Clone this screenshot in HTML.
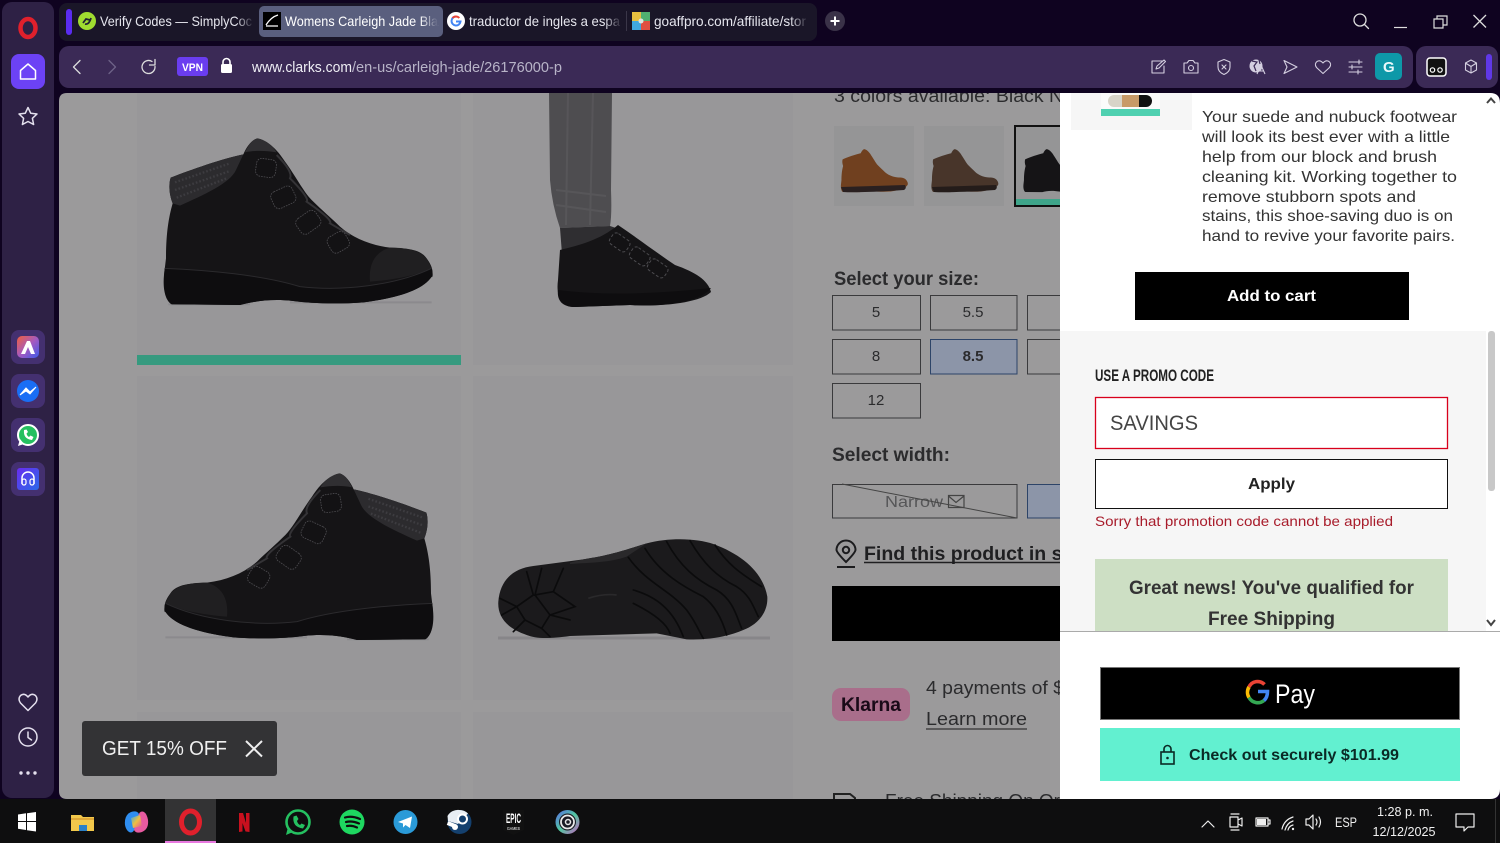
<!DOCTYPE html>
<html><head><meta charset="utf-8"><style>
html,body{margin:0;padding:0;background:#0f0320;width:1500px;height:843px;overflow:hidden}
svg{display:block}
text{font-family:"Liberation Sans",sans-serif}
.pg{fill:#2b2b2d;font-size:18px}
.p{fill:#333;font-size:16px}
.tab{fill:#e6e6ee;font-size:14px}
.ic{fill:none;stroke:#e4e0ee;stroke-width:1.5;stroke-linecap:round;stroke-linejoin:round}
.adr path,.adr circle{fill:none;stroke:#d4cfe0;stroke-width:1.100;stroke-linecap:round;stroke-linejoin:round}
.tr{fill:none;stroke:#eee;stroke-width:1.2;stroke-linecap:round;stroke-linejoin:round}
</style></head><body>
<svg width="1500" height="843" viewBox="0 0 1500 843" xmlns="http://www.w3.org/2000/svg">
<defs>
<path id="bs" d="M122 248C180 225 280 190 340 178C350 155 365 135 382 130C410 135 440 160 465 200C495 240 520 290 545 315C575 345 605 370 630 395C670 430 720 450 780 458C830 460 870 462 890 490C905 510 912 530 905 545C880 585 800 610 700 622C620 628 540 625 490 618C420 610 370 620 330 630L125 628C105 615 98 580 102 540L108 490C108 420 115 370 128 325C118 300 115 270 122 248Z"/>
<g id="boot">
<path d="M115 628H360M480 622H905" stroke="#7d7c80" stroke-width="6" opacity=".45"/>
<use href="#bs" fill="#151416"/>
<path d="M122 248C180 225 280 190 340 178L318 225C300 265 220 300 150 332L128 325C118 300 115 270 122 248Z" fill="#2c2b2e"/>
<path d="M135 262L300 205M135 285L300 228M140 308L290 250" stroke="#3d3c40" stroke-width="7" stroke-dasharray="5 6" fill="none"/>
<path d="M345 172C355 150 368 133 382 130C410 135 430 155 440 172C410 168 380 165 345 172Z" fill="#302f32"/>
<path d="M720 560C715 500 740 470 780 458C840 458 880 470 895 500L905 520C850 545 780 555 720 560Z" fill="#201f21"/>
<path d="M104 520C230 525 400 540 510 575C640 590 800 570 905 520C912 545 905 550 905 545C880 585 800 610 700 622C620 628 540 625 490 618C420 610 370 620 330 630L125 628C105 615 98 580 104 520Z" fill="#0e0d0f"/>
<path d="M104 520C230 525 400 540 510 575C640 590 800 570 905 520" fill="none" stroke="#2b2a2d" stroke-width="3"/>
<path d="M440 180Q490 230 480 250Q540 310 530 320Q610 375 600 385L660 420" fill="none" stroke="#343336" stroke-width="6"/>
<g fill="#131214" stroke="#4c4b4f" stroke-width="2.500" stroke-dasharray="5 3">
<rect x="378" y="192" width="60" height="54" rx="16" transform="rotate(8 408 219)"/>
<rect x="425" y="280" width="70" height="54" rx="16" transform="rotate(-25 460 307)"/>
<rect x="500" y="355" width="70" height="54" rx="16" transform="rotate(-35 535 382)"/>
<rect x="595" y="415" width="60" height="54" rx="16" transform="rotate(-30 625 442)"/>
</g>
</g>
<linearGradient id="fade" x1="0" x2="1" y1="0" y2="0"><stop offset="0" stop-color="#1a1628" stop-opacity="0"/><stop offset="1" stop-color="#1a1628"/></linearGradient>
<linearGradient id="fade2" x1="0" x2="1" y1="0" y2="0"><stop offset="0" stop-color="#5a5f7e" stop-opacity="0"/><stop offset="1" stop-color="#5a5f7e"/></linearGradient>
<linearGradient id="ap1" x1="0" y1="0" x2="1" y2="1"><stop offset="0" stop-color="#f0603c"/><stop offset=".5" stop-color="#a55ac0"/><stop offset="1" stop-color="#3c5ae8"/></linearGradient>
<linearGradient id="ap4" x1="0" y1="0" x2="1" y2="1"><stop offset="0" stop-color="#6a2cf0"/><stop offset="1" stop-color="#2a6ae8"/></linearGradient>
<linearGradient id="cop" x1="0" y1="0" x2="1" y2="1"><stop offset="0" stop-color="#2fa8f0"/><stop offset=".5" stop-color="#f0c040"/><stop offset="1" stop-color="#e04fa0"/></linearGradient>
<linearGradient id="ubi" x1="0" y1="0" x2="1" y2="1"><stop offset="0" stop-color="#5a6ae8"/><stop offset=".5" stop-color="#50c8a0"/><stop offset="1" stop-color="#c860c0"/></linearGradient>
<clipPath id="content"><path d="M67 93H1500V799H67Q59 799 59 791V101Q59 93 67 93Z"/></clipPath>
</defs>

<rect width="1500" height="843" fill="#0f0320"/>

<!-- sidebar -->
<rect x="2" y="2" width="52" height="796" rx="10" fill="#2e2145"/>
<ellipse cx="28" cy="28" rx="7.500" ry="9" fill="none" stroke="#e0202c" stroke-width="4.500"/>
<rect x="11" y="54" width="34" height="35" rx="8" fill="#6c42f5"/>
<path class="ic" style="stroke:#fff" d="M20.500 70.500L28 64L35.500 70.500V79H20.500Z"/>
<path class="ic" d="M28 107.500L30.700 113.200L37 114L32.400 118.300L33.600 124.500L28 121.500L22.400 124.500L23.600 118.300L19 114L25.300 113.200Z"/>
<rect x="11" y="330" width="34" height="34" rx="8" fill="#443070"/>
<rect x="17" y="336" width="22" height="22" rx="5" fill="url(#ap1)"/>
<path d="M21 354L27 341H30L35 354H31L28 347L25 354Z" fill="#fff"/>
<rect x="11" y="374" width="34" height="34" rx="8" fill="#443070"/>
<circle cx="28" cy="391" r="11" fill="#1a6ef5"/>
<path d="M20 395L26 388L30 392L36 387L30 394L26 391Z" fill="#fff" stroke="#fff"/>
<rect x="11" y="418" width="34" height="34" rx="8" fill="#443070"/>
<circle cx="28" cy="435" r="10" fill="#25c060" stroke="#fff" stroke-width="2"/>
<path d="M18 446L20 439L24 444Z" fill="#fff"/>
<path d="M24 430Q23 439 32 440L33.500 437L30.500 435.500L29 437Q27 436 26.500 433.500L28 432L26.500 429.500Z" fill="#fff"/>
<rect x="11" y="462" width="34" height="34" rx="8" fill="#443070"/>
<rect x="17" y="468" width="22" height="22" rx="3" fill="url(#ap4)"/>
<path d="M22 484V478A6 6 0 0 1 34 478V484" fill="none" stroke="#fff" stroke-width="1.500"/>
<rect x="22" y="479" width="4" height="6" rx="2" fill="none" stroke="#fff" stroke-width="1.200"/>
<rect x="30" y="479" width="4" height="6" rx="2" fill="none" stroke="#fff" stroke-width="1.200"/>
<path class="ic" d="M28 710.500L20.500 703Q17.500 699 20.500 695.500Q24.500 692.500 28 697Q31.500 692.500 35.500 695.500Q38.500 699 35.500 703Z"/>
<circle class="ic" cx="28" cy="737" r="9"/><path class="ic" d="M28 732V737.500L31.500 740"/>
<circle cx="21" cy="773" r="1.700" fill="#e4e0ee"/><circle cx="28" cy="773" r="1.700" fill="#e4e0ee"/><circle cx="35" cy="773" r="1.700" fill="#e4e0ee"/>

<!-- tabs -->
<rect x="59" y="3" width="758" height="38" rx="8" fill="#1a1628"/>
<rect x="66" y="9" width="6" height="26" rx="3" fill="#5a2cf0"/>
<circle cx="87" cy="21" r="9" fill="#9fdc30"/><path d="M83 23L86 19L90 20M85 24Q89 25 91 18" fill="none" stroke="#223" stroke-width="1.800"/>
<text class="tab" x="100" y="26" textLength="152" lengthAdjust="spacingAndGlyphs">Verify Codes — SimplyCoc</text>
<rect x="236" y="8" width="18" height="26" fill="url(#fade)"/>
<rect x="259" y="6" width="184" height="31" rx="5" fill="#5a5f7e"/>
<rect x="263" y="12" width="18" height="18" fill="#000"/><path d="M266 26H278M266 25Q271 17 278 15" fill="none" stroke="#fff" stroke-width="1.300"/>
<text class="tab" x="285" y="26" textLength="153" lengthAdjust="spacingAndGlyphs" style="fill:#fff">Womens Carleigh Jade Bla</text>
<rect x="420" y="8" width="18" height="26" fill="url(#fade2)"/>
<circle cx="456" cy="21" r="9" fill="#fff"/>
<path d="M456 16.500A4.500 4.500 0 1 0 460.500 21.500H456" fill="none" stroke="#4285f4" stroke-width="2"/>
<path d="M452.500 18A4.500 4.500 0 0 1 459.300 18" fill="none" stroke="#ea4335" stroke-width="2"/>
<text class="tab" x="469" y="26" textLength="151" lengthAdjust="spacingAndGlyphs">traductor de ingles a espa</text>
<rect x="604" y="8" width="18" height="26" fill="url(#fade)"/>
<rect x="626" y="11" width="1" height="20" fill="#3a3648"/>
<rect x="632" y="12" width="9" height="9" fill="#e8c040"/><rect x="641" y="12" width="9" height="9" fill="#50b070"/><rect x="632" y="21" width="9" height="9" fill="#40a8e0"/><rect x="641" y="21" width="9" height="9" fill="#e05040"/>
<circle cx="641" cy="21" r="2.500" fill="#dfe6e0"/>
<text class="tab" x="654" y="26" textLength="152" lengthAdjust="spacingAndGlyphs">goaffpro.com/affiliate/stor</text>
<rect x="790" y="8" width="18" height="26" fill="url(#fade)"/>
<circle cx="835" cy="21" r="10" fill="#3a3248"/>
<path d="M830.500 21H839.500M835 16.500V25.500" stroke="#fff" stroke-width="2"/>

<!-- window controls -->
<circle class="ic" style="stroke:#ddd;stroke-width:1.300" cx="1360" cy="20" r="6"/><path class="ic" style="stroke:#ddd;stroke-width:1.300" d="M1364.500 24.500L1368.500 28.500"/>
<path d="M1394 27.500H1407" stroke="#ddd" stroke-width="1.200"/>
<path d="M1434 19H1443V28H1434ZM1437 19V16H1447V25H1443" fill="none" stroke="#ddd" stroke-width="1.200"/>
<path d="M1473.500 15L1486 27.500M1486 15L1473.500 27.500" stroke="#ddd" stroke-width="1.300"/>

<!-- address bar -->
<rect x="59" y="46" width="1354" height="42" rx="10" fill="#3b2a56"/>
<rect x="1416" y="46" width="82" height="42" rx="10" fill="#3b2a56"/>
<path class="ic" style="stroke:#ddd;stroke-width:1.300" d="M80 60.500L73.500 67L80 73.500"/>
<path class="ic" style="stroke:#6e6288;stroke-width:1.300" d="M109 60.500L115.500 67L109 73.500"/>
<path class="ic" style="stroke:#ddd;stroke-width:1.300" d="M155 66.500A6.500 6.500 0 1 1 152 61.500M155 59.500V65H149.500"/>
<rect x="177" y="57" width="31" height="19" rx="3" fill="#6a3df0"/>
<text x="182" y="71" font-size="11" font-weight="700" fill="#fff" textLength="21" lengthAdjust="spacingAndGlyphs">VPN</text>
<rect x="221" y="64" width="11" height="9" rx="1.500" fill="#fff"/><path d="M223 64V62A3.500 3.500 0 0 1 230 62V64" fill="none" stroke="#fff" stroke-width="1.600"/>
<text x="252" y="72" font-size="15" fill="#eeeef4" textLength="100" lengthAdjust="spacingAndGlyphs">www.clarks.com</text>
<text x="352" y="72" font-size="15" fill="#b8b4c8" textLength="210" lengthAdjust="spacingAndGlyphs">/en-us/carleigh-jade/26176000-p</text>
<g class="adr">
<path d="M1163 61H1152V73H1164V66M1156 69L1157 66L1164 60L1165.500 61.500L1159 68Z"/>
<path d="M1184 63H1187L1189 60.500H1193L1195 63H1198V73H1184Z"/><circle cx="1191" cy="68" r="2.500"/>
<path d="M1224 59.500L1230 62V67Q1230 72 1224 74.500Q1218 72 1218 67V62Z"/><path d="M1222 65L1226 69M1226 65L1222 69"/>
<path d="M1284 60.500L1297 67L1284 73.500L1287 67Z"/>
<path d="M1323 73.500L1316.500 67.500Q1314 64 1317 61.500Q1320 59.500 1323 63Q1326 59.500 1329 61.500Q1332 64 1329.500 67.500Z"/>
<path d="M1349 62H1362M1349 67H1362M1349 72H1362M1359 60V64M1352 65V69M1358 70V74"/>
<path d="M1465.500 63L1471 60L1476.500 63V70L1471 73L1465.500 70ZM1465.500 63L1471 66.500L1476.500 63M1471 66.500V73"/>
</g>
<circle cx="1256" cy="66" r="6.500" fill="#d4cfe0"/>
<path d="M1252 61L1257 62L1254 66L1256 71M1259 60L1260 64" fill="none" stroke="#3b2a56" stroke-width="1.200"/>
<path d="M1257 74L1261 65L1265 74M1258.500 71H1263.500" fill="none" stroke="#d4cfe0" stroke-width="1.100"/>
<rect x="1375" y="53" width="27" height="27" rx="5" fill="#0e98a8"/>
<text x="1383" y="72" font-size="15" font-weight="700" fill="#e8f8fa">G</text>
<rect x="1427" y="58" width="19" height="18" rx="3" fill="#111" stroke="#fff" stroke-width="1.500"/>
<circle cx="1432.500" cy="70" r="2.200" fill="none" stroke="#fff" stroke-width="1.200"/><circle cx="1440" cy="70" r="2.200" fill="none" stroke="#fff" stroke-width="1.200"/>
<rect x="1486" y="54" width="6" height="26" rx="3" fill="#6038e8"/>

<!-- page -->
<g clip-path="url(#content)">
<rect x="59" y="93" width="1002" height="706" fill="#9b9a9b"/>
<g fill="#989799">
<rect x="137" y="93" width="324" height="272"/><rect x="473" y="93" width="320" height="272"/>
<rect x="137" y="376" width="324" height="324"/><rect x="473" y="376" width="320" height="324"/>
<rect x="137" y="712" width="324" height="90"/><rect x="473" y="712" width="320" height="90"/>
</g>
<rect x="137" y="355" width="324" height="10" fill="#369a7f"/>
<use href="#boot" transform="translate(130 95) scale(.3333)"/>
<use href="#boot" transform="translate(467 430) scale(-.3333 .3333)"/>

<!-- leg boot -->
<path d="M549 93H612L611 190Q612 215 610 226L560 228Q552 205 550 180Z" fill="#4e4d50"/>
<path d="M568 93L566 225M593 93L590 225M556 190L606 196M556 205L606 212" stroke="#5e5d60" stroke-width="2" opacity=".6"/>
<path d="M560 228L610 226L622 230L618 246L562 254Z" fill="#2f2e31"/>
<path d="M560 250C580 245 600 240 618 225C640 240 660 255 675 265C695 272 708 280 711 292C700 303 660 307 630 305L575 307C560 307 556 295 558 280Z" fill="#151416"/>
<path d="M558 290Q620 298 711 288C700 303 660 307 630 305L575 307C560 307 557 298 558 290Z" fill="#0e0d0f"/>
<g fill="#131214" stroke="#4c4b4f" stroke-dasharray="3 2"><rect x="610" y="236" width="20" height="13" rx="4" transform="rotate(35 620 242)"/><rect x="630" y="250" width="20" height="13" rx="4" transform="rotate(35 640 256)"/><rect x="648" y="262" width="20" height="13" rx="4" transform="rotate(35 658 268)"/></g>

<!-- sole -->
<path d="M498 638H770" stroke="#7c7b7f" stroke-width="3" opacity=".6"/>
<g transform="translate(470 500) scale(.3333)">
<path d="M85 305C90 240 130 205 190 198L340 178C430 165 480 145 530 130C600 112 680 115 730 132C820 165 880 220 892 290C895 340 860 375 820 390C760 415 700 420 650 418L560 400L300 408C230 418 195 415 170 405C110 385 82 350 85 305Z" fill="#1b1a1c"/>
<path d="M300 188L340 178C430 165 480 145 530 130L470 170C420 188 360 188 300 192Z" fill="#2a292b"/>
<g fill="none" stroke="#0b0b0c" stroke-width="5" stroke-linecap="round">
<path d="M475 172C530 250 600 270 650 330C680 370 690 400 700 415"/>
<path d="M525 145C570 220 640 260 700 290C740 320 760 370 770 405"/>
<path d="M590 125C630 200 680 240 740 270C790 300 800 350 815 385"/>
<path d="M660 122C700 190 740 230 800 260C840 285 850 320 865 350"/>
<path d="M735 135C770 190 810 220 875 260"/>
<path d="M490 270C560 290 610 330 640 410"/>
<path d="M490 310C550 340 590 370 600 400"/>
<path d="M170 215L190 285L140 320L90 295"/>
<path d="M215 205L195 285L250 275L280 205"/>
<path d="M250 275L315 320L240 345L195 285"/>
<path d="M240 345L300 360M240 345L215 385L240 410"/>
<path d="M140 320L165 360L215 385M165 360L130 395M140 320L95 345"/>
</g>
<path d="M355 295Q400 280 440 285" fill="none" stroke="#2a292b" stroke-width="5"/>
</g>

<!-- info column -->
<text class="pg" x="834" y="102" textLength="240" lengthAdjust="spacingAndGlyphs">3 colors available: Black Nu</text>
<rect x="834" y="126" width="80" height="80" fill="#959596"/><rect x="924" y="126" width="80" height="80" fill="#959596"/><rect x="1015" y="126" width="50" height="80" fill="#959596" stroke="#111" stroke-width="2"/>
<rect x="1016" y="199" width="46" height="6" fill="#3fa58a"/>
<use href="#bs" fill="#70401f" transform="translate(832.500 138) scale(.083 .086)"/>
<path d="M841 187L905 185Q907 188 904 190Q860 193 843 192Z" fill="#2a2020"/>
<use href="#bs" fill="#48352a" transform="translate(923 138) scale(.083 .086)"/>
<path d="M932 187L996 185Q998 188 995 190Q950 193 934 192Z" fill="#241c1a"/>
<use href="#bs" fill="#151416" transform="translate(1015 138) scale(.083 .086)"/>

<text x="834" y="285" font-size="19" font-weight="700" fill="#2b2b2d" textLength="145" lengthAdjust="spacingAndGlyphs">Select your size:</text>
<g fill="none" stroke="#3a3a3c" stroke-width="1">
<rect x="832.500" y="295.500" width="88" height="34.500"/><rect x="930.500" y="295.500" width="86.500" height="34.500"/><rect x="1027.500" y="295.500" width="60" height="34.500"/>
<rect x="832.500" y="339.500" width="88" height="34.500"/><rect x="1027.500" y="339.500" width="60" height="34.500"/>
<rect x="832.500" y="383.500" width="88" height="34.500"/>
<rect x="832.500" y="484.500" width="184.500" height="33.500"/>
</g>
<rect x="930.500" y="339.500" width="86.500" height="34.500" fill="#8c95a8" stroke="#2d4468"/>
<rect x="1027.500" y="484.500" width="60" height="33.500" fill="#8c95a8" stroke="#2d4468"/>
<g font-size="15" fill="#2b2b2d" text-anchor="middle">
<text x="876" y="317">5</text><text x="973" y="317">5.5</text><text x="876" y="361">8</text><text x="973" y="361" font-weight="700">8.5</text><text x="876" y="405">12</text>
</g>
<text x="832" y="461" font-size="19" font-weight="700" fill="#2b2b2d" textLength="118" lengthAdjust="spacingAndGlyphs">Select width:</text>
<text x="885" y="507" font-size="16" fill="#565658" textLength="58" lengthAdjust="spacingAndGlyphs">Narrow</text>
<path d="M948.500 495.500H964V507.500H948.500ZM948.500 496L956 502.500L964 496" fill="none" stroke="#444" stroke-width="1.200"/>
<path d="M842 484L1017 518" stroke="#444" stroke-width="1"/>
<path d="M846 562Q837 553 836.500 550A9.500 9.500 0 0 1 855.500 550Q855 553 846 562Z" fill="none" stroke="#1c1c1e" stroke-width="2"/>
<circle cx="846" cy="550" r="3.200" fill="none" stroke="#1c1c1e" stroke-width="2"/><path d="M837 567H855" stroke="#1c1c1e" stroke-width="2"/>
<text x="864" y="560" font-size="19" font-weight="700" fill="#1f1f21" textLength="205" lengthAdjust="spacingAndGlyphs">Find this product in st</text>
<path d="M864 562.500H1062" stroke="#1f1f21" stroke-width="1.500"/>
<rect x="832" y="586" width="235" height="55" fill="#000"/>
<rect x="832" y="688" width="78" height="33" rx="9" fill="#a96e8b"/>
<text x="841" y="711" font-size="19" font-weight="700" fill="#1a0a18" textLength="60" lengthAdjust="spacingAndGlyphs">Klarna</text>
<text class="pg" x="926" y="694" textLength="138" lengthAdjust="spacingAndGlyphs">4 payments of $</text>
<text class="pg" x="926" y="725" textLength="101" lengthAdjust="spacingAndGlyphs">Learn more</text>
<path d="M926 729H1027" stroke="#333" stroke-width="1.200"/>
<path d="M834 802V794H850L855 798V802" fill="none" stroke="#222" stroke-width="2"/>
<text class="pg" x="885" y="807" textLength="175" lengthAdjust="spacingAndGlyphs">Free Shipping On Or</text>

<!-- toast -->
<rect x="82" y="721" width="195" height="55" rx="3" fill="#333335"/>
<text x="102" y="755" font-size="20" fill="#f0f0f0" textLength="125" lengthAdjust="spacingAndGlyphs">GET 15% OFF</text>
<path d="M246 741L262 756.500M262 741L246 756.500" stroke="#eee" stroke-width="2"/>
</g>

<!-- cart panel -->
<path d="M1060 93H1490Q1500 93 1500 103V789Q1500 799 1490 799H1060Z" fill="#fff"/>
<rect x="1071" y="93" width="121" height="37" fill="#f6f6f6"/>
<rect x="1101" y="93" width="59" height="17" fill="#fbfbfa"/>
<path d="M1114 95H1122V107H1114A6 6 0 0 1 1114 95Z" fill="#d8d4c8"/>
<rect x="1122" y="95" width="17" height="12" fill="#c89a68"/>
<path d="M1139 95H1146A6 6 0 0 1 1146 107H1139Z" fill="#111"/>
<rect x="1101" y="109" width="59" height="7" fill="#4fd0b0"/>
<path d="M1487 103L1491 98.500L1495 103" fill="none" stroke="#444" stroke-width="2"/>
<g class="p">
<text x="1202" y="122" textLength="255" lengthAdjust="spacingAndGlyphs">Your suede and nubuck footwear</text>
<text x="1202" y="142" textLength="248" lengthAdjust="spacingAndGlyphs">will look its best ever with a little</text>
<text x="1202" y="162" textLength="235" lengthAdjust="spacingAndGlyphs">help from our block and brush</text>
<text x="1202" y="182" textLength="255" lengthAdjust="spacingAndGlyphs">cleaning kit. Working together to</text>
<text x="1202" y="202" textLength="214" lengthAdjust="spacingAndGlyphs">remove stubborn spots and</text>
<text x="1202" y="221" textLength="251" lengthAdjust="spacingAndGlyphs">stains, this shoe-saving duo is on</text>
<text x="1202" y="241" textLength="253" lengthAdjust="spacingAndGlyphs">hand to revive your favorite pairs.</text>
</g>
<rect x="1135" y="272" width="274" height="48" fill="#000"/>
<text x="1227" y="301" font-size="16" font-weight="700" fill="#fff" textLength="89" lengthAdjust="spacingAndGlyphs">Add to cart</text>
<rect x="1060" y="331" width="426" height="300" fill="#f6f6f6"/>
<text x="1095" y="381" font-size="17" font-weight="700" fill="#222" textLength="119" lengthAdjust="spacingAndGlyphs">USE A PROMO CODE</text>
<rect x="1095.500" y="397.500" width="352" height="51" fill="#fff" stroke="#d8001c" stroke-width="1.300"/>
<text x="1110" y="430" font-size="21" fill="#444" textLength="88" lengthAdjust="spacingAndGlyphs">SAVINGS</text>
<rect x="1095.500" y="459.500" width="352" height="49" fill="#fff" stroke="#111"/>
<text x="1248" y="489" font-size="16" font-weight="700" fill="#222" textLength="47" lengthAdjust="spacingAndGlyphs">Apply</text>
<text x="1095" y="526" font-size="14" fill="#a81c2b" textLength="298" lengthAdjust="spacingAndGlyphs">Sorry that promotion code cannot be applied</text>
<rect x="1095" y="559" width="353" height="72" fill="#cddfc4"/>
<text x="1129" y="594" font-size="19" font-weight="700" fill="#333" textLength="285" lengthAdjust="spacingAndGlyphs">Great news! You've qualified for</text>
<text x="1208" y="625" font-size="19" font-weight="700" fill="#333" textLength="127" lengthAdjust="spacingAndGlyphs">Free Shipping</text>
<rect x="1486" y="331" width="14" height="300" fill="#fff"/>
<rect x="1488" y="331" width="7" height="160" rx="3" fill="#c8c8c8"/>
<path d="M1487 620L1491 625L1495 620" fill="none" stroke="#444" stroke-width="2"/>
<rect x="1060" y="631" width="440" height="1" fill="#aaa"/>
<rect x="1100.500" y="667.500" width="359" height="52" fill="#000" stroke="#777"/>
<path d="M1264.500 684.500A9.500 9.500 0 0 0 1249 687" fill="none" stroke="#ea4335" stroke-width="3.600"/>
<path d="M1249 687A10 10 0 0 0 1249 697.500" fill="none" stroke="#fbbc04" stroke-width="3.600"/>
<path d="M1249 697.500A10 10 0 0 0 1264 700.500" fill="none" stroke="#34a853" stroke-width="3.600"/>
<path d="M1264 700.500Q1267.500 697.500 1267.500 691.500H1258" fill="none" stroke="#4285f4" stroke-width="3.600"/>
<text x="1275" y="703" font-size="27" fill="#fff" textLength="40" lengthAdjust="spacingAndGlyphs">Pay</text>
<rect x="1100" y="728" width="360" height="53" fill="#62f0d0"/>
<rect x="1161" y="752" width="13" height="12" fill="none" stroke="#0a2a25" stroke-width="1.600"/>
<path d="M1164 752V749A3.500 3.500 0 0 1 1171 749V752" fill="none" stroke="#0a2a25" stroke-width="1.600"/>
<circle cx="1167.500" cy="758" r="1.300" fill="#0a2a25"/>
<text x="1189" y="760" font-size="16" font-weight="700" fill="#0a2a25" textLength="210" lengthAdjust="spacingAndGlyphs">Check out securely $101.99</text>

<!-- taskbar -->
<rect x="0" y="799" width="1500" height="44" fill="#0e0e0f"/>
<g fill="#fff"><path d="M18 814.500L26 813.300V821H18ZM27 813.200L36 812V821H27ZM18 822H26V830L18 828.800ZM27 822H36V831.500L27 830.200Z"/></g>
<path d="M71 815H81L83 817H94V831H71Z" fill="#f2c84b"/><rect x="71" y="818" width="23" height="2" fill="#e0a838"/><rect x="79" y="825" width="8" height="6" fill="#2a80c8"/>
<path d="M125 825Q124 815 131 812Q137 810 139 814L135 828Q133 834 129 832Q126 830 125 825Z" fill="#2f8ef0"/>
<path d="M148 820Q149 829 142 832Q136 834 134 830L138 816Q140 810 144 812Q147 814 148 820Z" fill="#e85aa0"/>
<path d="M131 818L140 815L142 826L133 828Z" fill="url(#cop)"/>
<rect x="165" y="799" width="51" height="44" fill="#333334"/><rect x="165" y="841" width="51" height="2" fill="#e878e0"/>
<ellipse cx="190.500" cy="822" rx="9" ry="11" fill="none" stroke="#e0202c" stroke-width="5"/>
<path d="M239 813H243L246 823V813H249.500V832L245.500 831.500L242.500 823V831.500L239 832Z" fill="#c8101e"/>
<circle cx="298" cy="822" r="11.500" fill="none" stroke="#25c060" stroke-width="2.600"/>
<path d="M286 835L288 827L293 832Z" fill="#25c060"/>
<path d="M293.500 816.500Q292 827 303 828.500L305 825L301.500 823.500L300 825Q297.500 823.500 297 821L298.500 819L296.500 815.500Z" fill="#25c060"/>
<circle cx="352" cy="822" r="12.500" fill="#1ed760"/>
<path d="M345 817.500Q352 815.500 360 819M346 822Q352 820.500 359 823.500M347 826Q352 825 357 827.500" fill="none" stroke="#0e0e0f" stroke-width="2.200" stroke-linecap="round"/>
<circle cx="405.500" cy="822" r="12" fill="#2a9ad8"/><path d="M398 822L412 816.500L410 828L405.500 825L403 827.500L403 823.500Z" fill="#fff"/>
<circle cx="459.500" cy="822" r="12" fill="#14406e"/><path d="M447.500 823L455 826" stroke="#fff" stroke-width="4"/><path d="M447.500 816A12 12 0 0 1 459.500 810A12 12 0 0 1 468 813.500L458 824L448 821Z" fill="#e8eef4"/><circle cx="462.500" cy="819" r="4.500" fill="#14406e" stroke="#fff" stroke-width="2"/><circle cx="455" cy="827" r="3" fill="#fff"/>
<path d="M503 810H524V830L513.500 835L503 830Z" fill="#111"/>
<text x="506" y="823" font-size="14" font-weight="700" fill="#fff" textLength="15" lengthAdjust="spacingAndGlyphs">EPIC</text>
<text x="507" y="830" font-size="4.500" fill="#fff" textLength="13" lengthAdjust="spacingAndGlyphs">GAMES</text>
<circle cx="567.500" cy="822" r="12" fill="url(#ubi)"/>
<circle cx="567.500" cy="822" r="8.500" fill="#1a1a24"/><circle cx="567.500" cy="822" r="6.500" fill="none" stroke="#e8e8e8" stroke-width="1.800"/><circle cx="568" cy="822" r="2.500" fill="none" stroke="#e8e8e8" stroke-width="1.500"/>

<!-- tray -->
<path class="tr" d="M1202 827L1208 821L1214 827"/>
<path class="tr" d="M1230 817H1238V827H1230ZM1238 820L1242 818V826L1238 824M1231 814H1239M1231 830H1239"/>
<path class="tr" d="M1256 818H1268V826H1256ZM1268 820H1270V824H1268"/><rect x="1257" y="819" width="9" height="6" fill="#eee"/>
<path class="tr" d="M1282 829Q1284 820 1293 817M1285 830Q1287 823 1293 821M1288 830Q1289 826 1293 825"/><circle cx="1293" cy="829" r="1.200" fill="#eee"/>
<path class="tr" d="M1306 819H1309L1313 815V829L1309 825H1306ZM1316 819Q1318 822 1316 825M1319 817Q1322 822 1319 827"/>
<text x="1335" y="827" font-size="14" fill="#f0f0f0" textLength="22" lengthAdjust="spacingAndGlyphs">ESP</text>
<text x="1405" y="816" font-size="13" fill="#f0f0f0" text-anchor="middle" textLength="56" lengthAdjust="spacingAndGlyphs">1:28 p. m.</text>
<text x="1404" y="836" font-size="13" fill="#f0f0f0" text-anchor="middle" textLength="63" lengthAdjust="spacingAndGlyphs">12/12/2025</text>
<path class="tr" d="M1456 814H1474V827H1468L1464 831V827H1456Z"/>
<rect x="1495" y="799" width="1" height="44" fill="#333"/>
</svg>
</body></html>
